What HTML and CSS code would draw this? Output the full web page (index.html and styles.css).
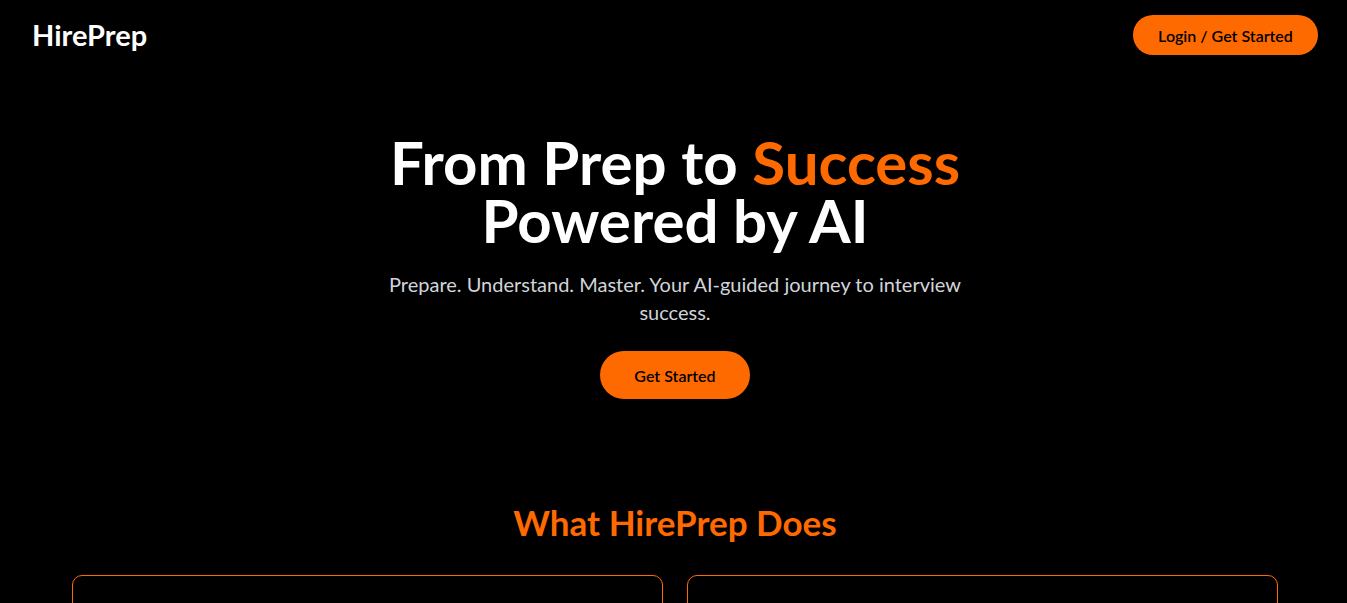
FILE: index.html
```html
<!DOCTYPE html>
<html lang="en">
<head>
<meta charset="utf-8">
<title>HirePrep</title>
<link rel="stylesheet" href="styles.css">
</head>
<body>
<div class="page">
  <header class="header">
    <div class="logo">HirePrep</div>
    <button class="btn btn-nav">Login / Get Started</button>
  </header>
  <section class="hero">
    <h1 class="hero-title">From Prep to <span class="accent">Success</span><br>Powered by AI</h1>
    <p class="hero-sub">Prepare. Understand. Master. Your AI-guided journey to interview success.</p>
    <button class="btn btn-hero">Get Started</button>
  </section>
  <section class="features">
    <h2 class="features-title">What HirePrep Does</h2>
    <div class="cards">
      <div class="card"></div>
      <div class="card"></div>
    </div>
  </section>
</div>
</body>
</html>
```

FILE: styles.css
```css
html, body {
  margin: 0;
  padding: 0;
  background: #000;
  overflow-x: hidden;
}
body {
  font-family: "Lato", "Noto Sans", sans-serif;
  color: #fff;
}
.page {
  width: 1350px;
}
.header {
  display: flex;
  justify-content: space-between;
  align-items: center;
  padding: 15px 32px;
}
.logo {
  font-size: 29px;
  font-weight: 700;
  line-height: 40px;
}
.btn {
  background: #ff6a00;
  color: #000;
  border: none;
  border-radius: 999px;
  font-family: inherit;
  font-weight: 600;
  font-size: 16px;
  cursor: pointer;
}
.btn-nav {
  height: 40px;
  width: 185px;
}
.hero {
  display: flex;
  flex-direction: column;
  align-items: center;
  text-align: center;
  padding-top: 63px;
}
.hero-title {
  margin: 0;
  font-size: 60px;
  line-height: 58px;
  font-weight: 700;
}
.accent {
  color: #ff6a00;
}
.hero-sub {
  max-width: 576px;
  margin: 21px 0 0;
  font-size: 20px;
  line-height: 28px;
  color: #d1d5db;
}
.btn-hero {
  margin-top: 25px;
  width: 150px;
  height: 48px;
}
.features {
  padding: 103px 72px 0;
}
.features-title {
  margin: 0;
  text-align: center;
  color: #ff6a00;
  font-size: 35px;
  line-height: 40px;
  font-weight: 700;
}
.cards {
  display: grid;
  grid-template-columns: 1fr 1fr;
  gap: 24px;
  margin-top: 33px;
}
.card {
  border: 1px solid #ff6a00;
  border-radius: 10px;
  height: 200px;
}
```
